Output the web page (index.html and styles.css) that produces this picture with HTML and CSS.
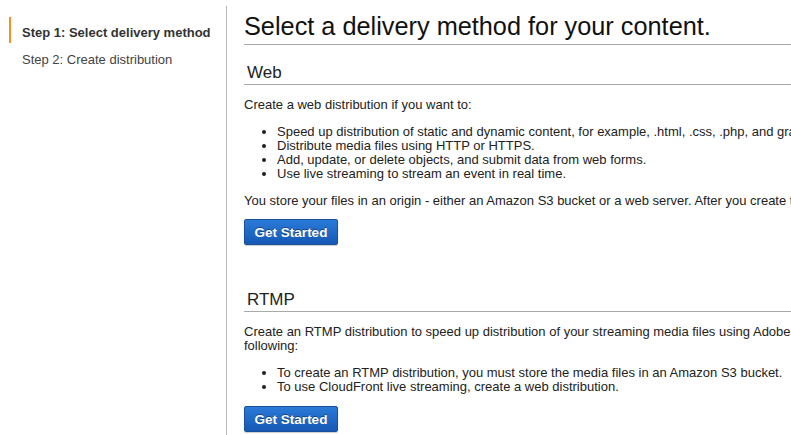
FILE: index.html
```html
<!DOCTYPE html>
<html>
<head>
<meta charset="utf-8">
<link rel="stylesheet" href="styles.css">
</head>
<body>
<div class="page">
  <nav class="sidebar">
    <ul class="steps">
      <li class="step active">Step 1: Select delivery method</li>
      <li class="step">Step 2: Create distribution</li>
    </ul>
  </nav>
  <main class="main">
    <h1 class="title">Select a delivery method for your content.</h1>
    <section class="method">
      <h2 class="method-title">Web</h2>
      <p class="text">Create a web distribution if you want to:</p>
      <ul class="bullets">
        <li>Speed up distribution of static and dynamic content, for example, .html, .css, .php, and graphics files.</li>
        <li>Distribute media files using HTTP or HTTPS.</li>
        <li>Add, update, or delete objects, and submit data from web forms.</li>
        <li>Use live streaming to stream an event in real time.</li>
      </ul>
      <p class="text">You store your files in an origin - either an Amazon S3 bucket or a web server. After you create the distribution, you can add more origins.</p>
      <button class="btn">Get Started</button>
    </section>
    <section class="method rtmp">
      <h2 class="method-title">RTMP</h2>
      <p class="text">Create an RTMP distribution to speed up distribution of your streaming media files using Adobe Flash Media Server's RTMP protocol. Note the<br>following:</p>
      <ul class="bullets">
        <li>To create an RTMP distribution, you must store the media files in an Amazon S3 bucket.</li>
        <li>To use CloudFront live streaming, create a web distribution.</li>
      </ul>
      <button class="btn">Get Started</button>
    </section>
  </main>
</div>
</body>
</html>
```
FILE: styles.css
```css
html, body {
  margin: 0;
  padding: 0;
  background: #fff;
  overflow: hidden;
}
body {
  font-family: "Liberation Sans", Arial, sans-serif;
  color: #222;
  font-size: 13px;
}
.page {
  display: flex;
  align-items: flex-start;
  width: 1400px;
}
.sidebar {
  width: 226px;
  flex: none;
  margin-top: 6px;
  min-height: 429px;
  border-right: 1px solid #b8b8b8;
}
.steps {
  list-style: none;
  margin: 0;
  padding: 11px 0 0 0;
}
.step {
  padding: 6px 0 6px 13px;
  margin-left: 9px;
  line-height: 15px;
  color: #444;
}
.step.active {
  border-left: 2px solid #f7901e;
  padding-left: 11px;
  font-weight: bold;
  color: #333;
  padding-top: 8px;
  padding-bottom: 3px;
  margin-bottom: 3px;
}
.main {
  width: 1100px;
  padding-left: 17px;
  flex: none;
  white-space: nowrap;
}
.title {
  font-size: 25.3px;
  font-weight: normal;
  color: #111;
  margin: 11px 0 0 0;
  line-height: 30px;
  padding-bottom: 3px;
  border-bottom: 1px solid #aaa;
}
.method-title {
  font-size: 17px;
  font-weight: normal;
  color: #222;
  margin: 0;
  padding: 1px 0 1px 3px;
  line-height: 20px;
  border-bottom: 1px solid #aaa;
}
.method {
  padding-top: 17px;
}
.method.rtmp {
  padding-top: 44px;
}
.text {
  margin: 13px 0 0 0;
  line-height: 14px;
}
.bullets {
  margin: 13px 0 0 0;
  padding-left: 33px;
  line-height: 14px;
}
.btn {
  display: block;
  margin-top: 11px;
  width: 94px;
  height: 26px;
  padding: 0;
  border: 1px solid #1a4f9a;
  border-radius: 2px;
  background: linear-gradient(#2b7ad8, #1459b5);
  color: #fff;
  font-family: "Liberation Sans", Arial, sans-serif;
  font-weight: bold;
  font-size: 13.5px;
  text-shadow: 0 -1px 0 rgba(0,0,0,0.4);
  box-shadow: 0 1px 1px rgba(0,0,0,0.2);
}
.rtmp .btn {
  margin-top: 12px;
}
```
